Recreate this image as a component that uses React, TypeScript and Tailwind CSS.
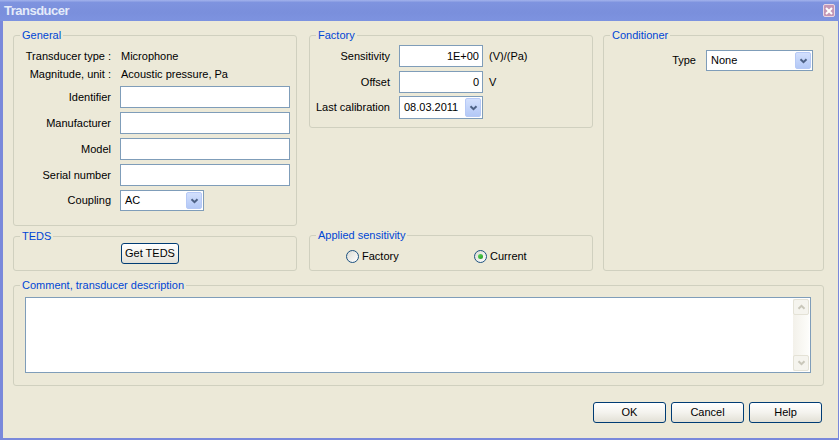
import React from "react";

function Group({
  label,
  className = "",
  children,
}: {
  label: string;
  className?: string;
  children?: React.ReactNode;
}) {
  return (
    <div className={"relative border border-[#d0d0bf] rounded-[3px] " + className}>
      <span className="absolute -top-[7px] left-[6px] px-[2px] bg-[#ece9d8] text-[#0046d5] leading-[13px] whitespace-nowrap">
        {label}
      </span>
      {children}
    </div>
  );
}

function Chevron({ color = "#4d6185" }: { color?: string }) {
  return (
    <svg width="9" height="6" viewBox="0 0 9 6">
      <path d="M1.5 1.2 L4.5 4.2 L7.5 1.2" fill="none" stroke={color} strokeWidth="2" />
    </svg>
  );
}

function DropBtn() {
  return (
    <div className="w-[16px] h-full rounded-[2px] border border-[#b6c9f6] bg-gradient-to-b from-[#d3e0fd] to-[#b3c8f6] flex items-center justify-center">
      <Chevron />
    </div>
  );
}

function Combo({ value, className = "" }: { value: string; className?: string }) {
  return (
    <div className={"border border-[#7f9db9] bg-white flex items-stretch p-[1px] " + className}>
      <span className="flex-1 flex items-center pl-[3px] leading-none">{value}</span>
      <DropBtn />
    </div>
  );
}

function TextBox({ value = "", right = false, className = "" }: { value?: string; right?: boolean; className?: string }) {
  return (
    <div
      className={
        "border border-[#7f9db9] bg-white flex items-center px-[3px] " +
        (right ? "justify-end " : "") +
        className
      }
    >
      {value}
    </div>
  );
}

function XPButton({ label, className = "" }: { label: string; className?: string }) {
  return (
    <div
      className={
        "h-[21px] border border-[#003c74] rounded-[3px] bg-gradient-to-b from-white via-[#f4f3ee] to-[#e2e0d6] flex items-center justify-center text-black " +
        className
      }
    >
      {label}
    </div>
  );
}

function Radio({ checked }: { checked?: boolean }) {
  return (
    <div className="w-[13px] h-[13px] rounded-full border border-[#1c5180] bg-gradient-to-br from-[#dcdcd4] to-white flex items-center justify-center shrink-0">
      {checked && <div className="w-[5px] h-[5px] rounded-full bg-gradient-to-br from-[#5fd85c] to-[#1e9a1e]" />}
    </div>
  );
}

function GenRow({ label, children }: { label: string; children: React.ReactNode }) {
  return (
    <div className="flex items-center">
      <span className="w-[97px] text-right shrink-0">{label}</span>
      <div className="ml-[9px]">{children}</div>
    </div>
  );
}

export default function App() {
  return (
    <div className="w-[839px] h-[440px] flex flex-col bg-[#7a89db] overflow-hidden font-['Liberation_Sans',Arial,sans-serif] text-[11px] text-black">
      {/* Title bar */}
      <div className="h-[21px] shrink-0 flex items-center justify-between pl-[4px] pr-[4px] bg-[linear-gradient(to_bottom,#a3b3ec,#7e93df_12%,#7a8fdc_60%,#7d93e0)]">
        <span className="text-[13px] font-bold tracking-[-0.5px] text-[#e4ebfa] leading-none">Transducer</span>
        <div className="w-[12px] h-[13px] rounded-[2px] border border-[#ead7e3] bg-[#c497b5] flex items-center justify-center">
          <svg width="8" height="8" viewBox="0 0 8 8">
            <path d="M1 1 L7 7 M7 1 L1 7" stroke="white" strokeWidth="2" />
          </svg>
        </div>
      </div>

      {/* Client area */}
      <div className="flex-1 ml-[3px] mr-[1px] mb-[2px] bg-[#ece9d8] flex flex-col pl-[10px] pr-[14px] pt-[14px]">
        {/* Top row */}
        <div className="flex h-[236px] shrink-0">
          {/* Left column */}
          <div className="w-[284px] flex flex-col shrink-0">
            <Group label="General" className="h-[191px] pt-[11px]">
              <div className="flex flex-col">
                <div className="h-[18px] flex items-center">
                  <span className="w-[97px] text-right shrink-0">Transducer type :</span>
                  <span className="ml-[10px]">Microphone</span>
                </div>
                <div className="h-[18px] flex items-center">
                  <span className="w-[97px] text-right shrink-0">Magnitude, unit :</span>
                  <span className="ml-[10px]">Acoustic pressure, Pa</span>
                </div>
                <div className="mt-[3px] flex flex-col gap-[4px]">
                  <GenRow label="Identifier">
                    <TextBox className="w-[170px] h-[22px]" />
                  </GenRow>
                  <GenRow label="Manufacturer">
                    <TextBox className="w-[170px] h-[22px]" />
                  </GenRow>
                  <GenRow label="Model">
                    <TextBox className="w-[170px] h-[22px]" />
                  </GenRow>
                  <GenRow label="Serial number">
                    <TextBox className="w-[170px] h-[22px]" />
                  </GenRow>
                  <GenRow label="Coupling">
                    <Combo value="AC" className="w-[84px] h-[21px]" />
                  </GenRow>
                </div>
              </div>
            </Group>
            <Group label="TEDS" className="mt-[10px] h-[35px] pt-[6px] pl-[107px]">
              <XPButton label="Get TEDS" className="w-[58px]" />
            </Group>
          </div>

          {/* Middle column */}
          <div className="w-[284px] ml-[12px] flex flex-col justify-between shrink-0">
            <Group label="Factory" className="h-[93px] pt-[9px]">
              <div className="flex flex-col">
                <div className="flex items-center h-[22px]">
                  <span className="w-[80px] text-right shrink-0">Sensitivity</span>
                  <TextBox value="1E+00" right className="ml-[9px] w-[84px] h-[22px]" />
                  <span className="ml-[6px]">(V)/(Pa)</span>
                </div>
                <div className="flex items-center h-[22px] mt-[4px]">
                  <span className="w-[80px] text-right shrink-0">Offset</span>
                  <TextBox value="0" right className="ml-[9px] w-[84px] h-[22px]" />
                  <span className="ml-[6px]">V</span>
                </div>
                <div className="flex items-center h-[23px] mt-[3px]">
                  <span className="w-[80px] text-right shrink-0">Last calibration</span>
                  <Combo value="08.03.2011" className="ml-[9px] w-[84px] h-[23px]" />
                </div>
              </div>
            </Group>
            <Group label="Applied sensitivity" className="h-[36px] pt-[12px]">
              <div className="flex items-center pl-[36px]">
                <div className="w-[128px] flex items-center">
                  <Radio />
                  <span className="ml-[3px]">Factory</span>
                </div>
                <div className="flex items-center">
                  <Radio checked />
                  <span className="ml-[3px]">Current</span>
                </div>
              </div>
            </Group>
          </div>

          {/* Right column */}
          <div className="w-[221px] ml-[10px] shrink-0">
            <Group label="Conditioner" className="h-full pt-[14px]">
              <div className="flex items-center justify-end pr-[10px]">
                <span>Type</span>
                <Combo value="None" className="ml-[10px] w-[107px] h-[21px]" />
              </div>
            </Group>
          </div>
        </div>

        {/* Comment */}
        <Group label="Comment, transducer description" className="mt-[14px] h-[101px] shrink-0 pt-[11px] pl-[11px] pr-[12px]">
          <div className="h-[76px] border border-[#7f9db9] bg-white flex justify-end p-[1px]">
            <div className="w-[16px] h-full flex flex-col bg-gradient-to-r from-[#f3f1ea] to-[#fdfdfa]">
              <div className="h-[16px] rounded-[2px] border border-[#e4e2d6] bg-[#f5f4ee] flex items-center justify-center">
                <div className="rotate-180 flex">
                  <Chevron color="#c9c7ba" />
                </div>
              </div>
              <div className="flex-1" />
              <div className="h-[16px] rounded-[2px] border border-[#e4e2d6] bg-[#f5f4ee] flex items-center justify-center">
                <Chevron color="#c9c7ba" />
              </div>
            </div>
          </div>
        </Group>

        {/* Buttons */}
        <div className="mt-[16px] flex justify-end gap-[5px] pr-[2px]">
          <XPButton label="OK" className="w-[73px]" />
          <XPButton label="Cancel" className="w-[73px]" />
          <XPButton label="Help" className="w-[73px]" />
        </div>
      </div>
    </div>
  );
}
